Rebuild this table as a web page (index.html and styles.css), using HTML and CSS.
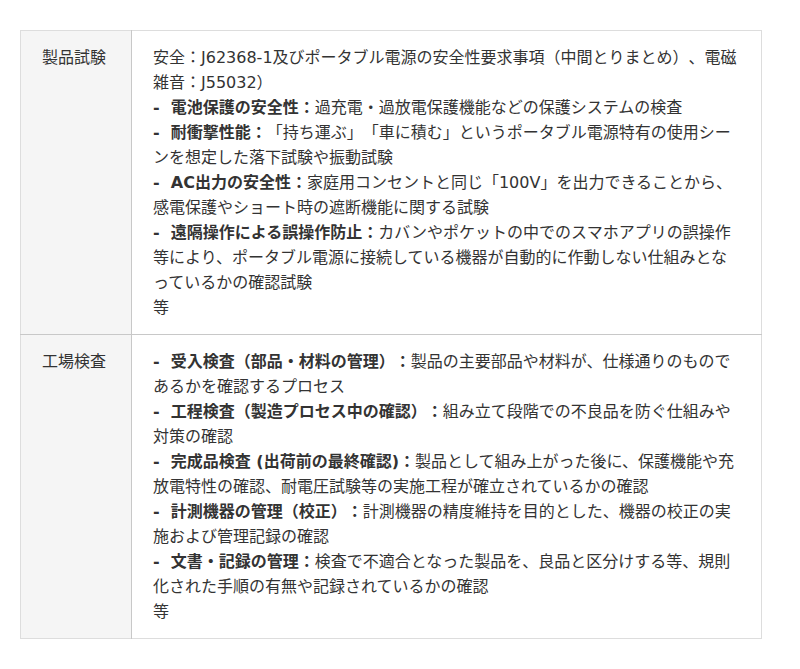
FILE: index.html
```html
<!DOCTYPE html>
<html lang="ja">
<head>
    <meta charset="UTF-8">
    <meta name="viewport" content="width=device-width, initial-scale=1.0">
    <title>試験・検査</title>
    <link rel="stylesheet" href="styles.css">
</head>
<body>

    <table class="spec">
        <tr>
            <th>製品試験</th>
            <td>
                安全：J62368-1及びポータブル電源の安全性要求事項（中間とりまとめ）、電磁雑音：J55032）<br>
                <b>-&nbsp; 電池保護の安全性：</b>過充電・過放電保護機能などの保護システムの検査<br>
                <b>-&nbsp; 耐衝撃性能：</b>「持ち運ぶ」「車に積む」というポータブル電源特有の使用シーンを想定した落下試験や振動試験<br>
                <b>-&nbsp; AC出力の安全性：</b>家庭用コンセントと同じ「100V」を出力できることから、感電保護やショート時の遮断機能に関する試験<br>
                <b>-&nbsp; 遠隔操作による誤操作防止：</b>カバンやポケットの中でのスマホアプリの誤操作等により、ポータブル電源に接続している機器が自動的に作動しない仕組みとなっているかの確認試験<br>
                等
            </td>
        </tr>
        <tr>
            <th>工場検査</th>
            <td>
                <b>-&nbsp; 受入検査（部品・材料の管理）：</b>製品の主要部品や材料が、仕様通りのものであるかを確認するプロセス<br>
                <b>-&nbsp; 工程検査（製造プロセス中の確認）：</b>組み立て段階での不良品を防ぐ仕組みや対策の確認<br>
                <b>-&nbsp; 完成品検査 (出荷前の最終確認)：</b>製品として組み上がった後に、保護機能や充放電特性の確認、耐電圧試験等の実施工程が確立されているかの確認<br>
                <b>-&nbsp; 計測機器の管理（校正）：</b>計測機器の精度維持を目的とした、機器の校正の実施および管理記録の確認<br>
                <b>-&nbsp; 文書・記録の管理：</b>検査で不適合となった製品を、良品と区分けする等、規則化された手順の有無や記録されているかの確認<br>
                等
            </td>
        </tr>
    </table>

</body>
</html>
```

FILE: styles.css
```css
body {
    font-family: "DejaVu Sans", "Noto Sans CJK JP", sans-serif;
    margin: 0;
    padding: 30px 38px 30px 20px;
    background-color: #ffffff;
    color: #333333;
}

.spec {
    width: 742px;
    border-collapse: collapse;
    border: 1px solid #dddddd;
    font-size: 16px;
    line-height: 25px;
    text-spacing-trim: space-all; /* 約物を詰めない */
}

.spec tr + tr th,
.spec tr + tr td {
    border-top: 1px solid #c8c8c8;
}

.spec th {
    width: 68px; /* 111px incl. padding */
    padding: 14px 21px;
    background-color: #f5f5f5;
    border-right: 1px solid #c8c8c8;
    font-weight: normal;
    text-align: left;
    vertical-align: top;
}

.spec td {
    padding: 14px 20px 14px 21px;
    vertical-align: top;
}

.spec b {
    font-weight: bold;
}
```
